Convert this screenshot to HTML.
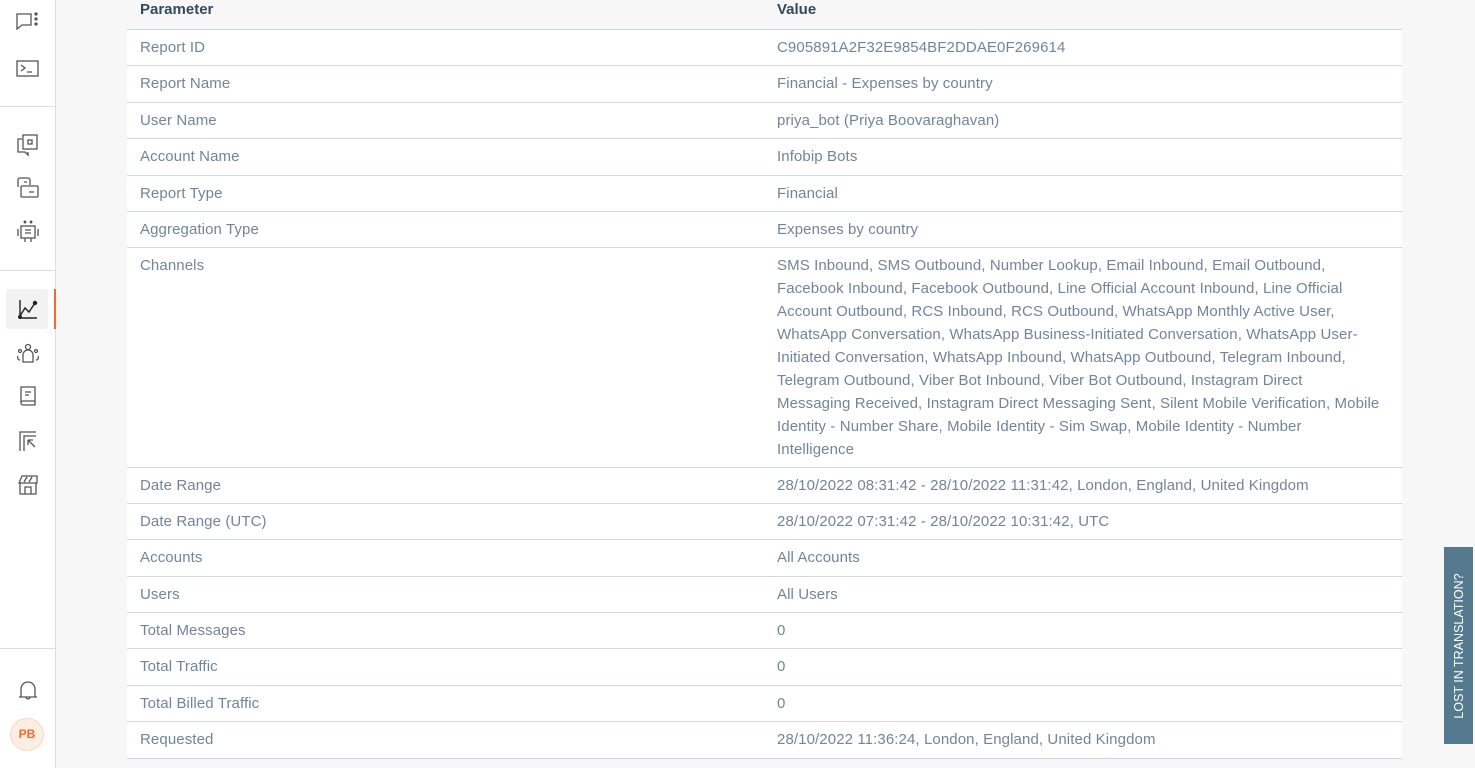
<!DOCTYPE html>
<html><head><meta charset="utf-8"><style>
*{margin:0;padding:0;box-sizing:border-box}
body{width:1475px;height:768px;overflow:hidden;background:#f7f7f7;font-family:"Liberation Sans",sans-serif;position:relative}
.sb{position:absolute;left:0;top:0;width:56px;height:768px;background:#fff;border-right:1px solid #ddd}
.sep{position:absolute;left:0;width:55px;height:1px;background:#ddd}
.ic{position:absolute;left:14px;width:28px;height:28px}
.tbl{position:absolute;left:127px;top:0;width:1275px}
.row{position:absolute;left:0;width:1275px;background:#fff;border-bottom:1px solid #cfd8e0;color:#71859a;font-size:15px;letter-spacing:0.1px}
.row .a{position:absolute;left:13px;top:9px;white-space:nowrap}
.row .b{position:absolute;left:650px;top:9px;white-space:nowrap}
.row .c{position:absolute;left:650px;top:6px;white-space:nowrap;line-height:23px}
.hd{position:absolute;left:0;top:0;width:1275px;height:30px;border-bottom:1px solid #cfd8e0;color:#34495a;font-weight:bold;font-size:15px}
.lost{position:absolute;left:1444px;top:547px;width:29px;height:197px;background:#557a90;color:#fff}
.lost span{position:absolute;left:50%;top:50%;transform:translate(-50%,-50%) rotate(-90deg);white-space:nowrap;font-size:12.5px}
</style></head><body>
<div class="sb">
<svg class="ic" style="top:8px" viewBox="0 0 28 28" fill="none" stroke="#555" stroke-width="1.3"><path d="M3 6h14v11H8l-5 4z"/><circle cx="22" cy="6" r="1" fill="#555"/><circle cx="22" cy="11" r="1" fill="#555"/><circle cx="22" cy="16" r="1" fill="#555"/></svg>
<svg class="ic" style="top:55px" viewBox="0 0 28 28" fill="none" stroke="#555" stroke-width="1.3"><rect x="3" y="6" width="21" height="15"/><path d="M7 10l4 3-4 3M13 17h5"/></svg>
<div class="sep" style="top:106px"></div>
<svg class="ic" style="top:131px" viewBox="0 0 28 28" fill="none" stroke="#555" stroke-width="1.3"><path d="M8 8H4v13h7l3 3v-3"/><rect x="9" y="4" width="14" height="14"/><rect x="14" y="9" width="4" height="4"/></svg>
<svg class="ic" style="top:174px" viewBox="0 0 28 28" fill="none" stroke="#555" stroke-width="1.3"><path d="M4 13V6a2 2 0 012-2h8a2 2 0 012 2v5"/><rect x="7" y="12" width="17" height="11" rx="1"/><path d="M10 8h3M15 18h5"/></svg>
<svg class="ic" style="top:218px" viewBox="0 0 28 28" fill="none" stroke="#555" stroke-width="1.3"><rect x="7" y="8" width="14" height="12"/><path d="M11 12h6M11 15h6M4 11v7M24 11v7M11 20v4M17 20v4"/><circle cx="11" cy="4" r=".8" fill="#555"/><circle cx="17" cy="4" r=".8" fill="#555"/></svg>
<div class="sep" style="top:270px"></div>
<div style="position:absolute;left:6px;top:289px;width:42px;height:40px;background:#f2f2f2;border-radius:3px"></div>
<div style="position:absolute;left:54px;top:289px;width:2px;height:40px;background:#f26b2d"></div>
<svg class="ic" style="top:295px" viewBox="0 0 28 28" fill="none" stroke="#222" stroke-width="1.4"><path d="M6 5v18h17M6 21l5-8 4 4 6-9"/><circle cx="21" cy="8" r="1.5" fill="#222"/><circle cx="6" cy="22" r="1.3" fill="#222"/></svg>
<svg class="ic" style="top:340px" viewBox="0 0 28 28" fill="none" stroke="#555" stroke-width="1.3"><circle cx="14" cy="7" r="2.5"/><path d="M9 22v-7a5 5 0 0110 0v7zM6 20c-2 0-3-2-2-4M22 20c2 0 3-2 2-4"/><circle cx="6" cy="11" r="1.5"/><circle cx="22" cy="11" r="1.5"/></svg>
<svg class="ic" style="top:383px" viewBox="0 0 28 28" fill="none" stroke="#555" stroke-width="1.3"><path d="M7 20V4h14v18H9a2 2 0 010-4h12M11 9h6M11 12h4"/></svg>
<svg class="ic" style="top:427px" viewBox="0 0 28 28" fill="none" stroke="#555" stroke-width="1.3"><path d="M6 24V5h16M10 24V9h12M14 13l7 7M14 13v5M14 13h5"/></svg>
<svg class="ic" style="top:471px" viewBox="0 0 28 28" fill="none" stroke="#555" stroke-width="1.3"><path d="M5 12h18V5H8zM6 12v11h16V12M11 23v-7h6v7M10 11l3-5M15 11l3-5"/></svg>
<div class="sep" style="top:648px"></div>
<svg class="ic" style="top:677px" viewBox="0 0 28 28" fill="none" stroke="#555" stroke-width="1.3"><path d="M7 20v-8a7 7 0 0114 0v8zM5 20h18M12 20a2 2 0 004 0"/></svg>
<div style="position:absolute;left:10px;top:718px;width:34px;height:33px;border-radius:50%;background:#fdeee3;border:1px solid #f8d9c2;color:#f26b2d;font-size:12px;font-weight:bold;text-align:center;line-height:31px">PB</div>
</div>
<div class="tbl">
<div class="hd"><span style="position:absolute;left:13px;top:1px">Parameter</span><span style="position:absolute;left:650px;top:1px">Value</span></div>
<div class="row" style="top:30px;height:36px"><span class="a">Report ID</span><span class="b">C905891A2F32E9854BF2DDAE0F269614</span></div>
<div class="row" style="top:66px;height:37px"><span class="a">Report Name</span><span class="b">Financial - Expenses by country</span></div>
<div class="row" style="top:103px;height:36px"><span class="a">User Name</span><span class="b">priya_bot (Priya Boovaraghavan)</span></div>
<div class="row" style="top:139px;height:37px"><span class="a">Account Name</span><span class="b">Infobip Bots</span></div>
<div class="row" style="top:176px;height:36px"><span class="a">Report Type</span><span class="b">Financial</span></div>
<div class="row" style="top:212px;height:36px"><span class="a">Aggregation Type</span><span class="b">Expenses by country</span></div>
<div class="row" style="top:248px;height:220px"><span class="a">Channels</span><span class="c">SMS Inbound, SMS Outbound, Number Lookup, Email Inbound, Email Outbound,<br>Facebook Inbound, Facebook Outbound, Line Official Account Inbound, Line Official<br>Account Outbound, RCS Inbound, RCS Outbound, WhatsApp Monthly Active User,<br>WhatsApp Conversation, WhatsApp Business-Initiated Conversation, WhatsApp User-<br>Initiated Conversation, WhatsApp Inbound, WhatsApp Outbound, Telegram Inbound,<br>Telegram Outbound, Viber Bot Inbound, Viber Bot Outbound, Instagram Direct<br>Messaging Received, Instagram Direct Messaging Sent, Silent Mobile Verification, Mobile<br>Identity - Number Share, Mobile Identity - Sim Swap, Mobile Identity - Number<br>Intelligence</span></div>
<div class="row" style="top:468px;height:36px"><span class="a">Date Range</span><span class="b">28/10/2022 08:31:42 - 28/10/2022 11:31:42, London, England, United Kingdom</span></div>
<div class="row" style="top:504px;height:36px"><span class="a">Date Range (UTC)</span><span class="b">28/10/2022 07:31:42 - 28/10/2022 10:31:42, UTC</span></div>
<div class="row" style="top:540px;height:37px"><span class="a">Accounts</span><span class="b">All Accounts</span></div>
<div class="row" style="top:577px;height:36px"><span class="a">Users</span><span class="b">All Users</span></div>
<div class="row" style="top:613px;height:36px"><span class="a">Total Messages</span><span class="b">0</span></div>
<div class="row" style="top:649px;height:37px"><span class="a">Total Traffic</span><span class="b">0</span></div>
<div class="row" style="top:686px;height:36px"><span class="a">Total Billed Traffic</span><span class="b">0</span></div>
<div class="row" style="top:722px;height:37px"><span class="a">Requested</span><span class="b">28/10/2022 11:36:24, London, England, United Kingdom</span></div>
</div>
<div class="lost"><span>LOST IN TRANSLATION?</span></div>
</body></html>
